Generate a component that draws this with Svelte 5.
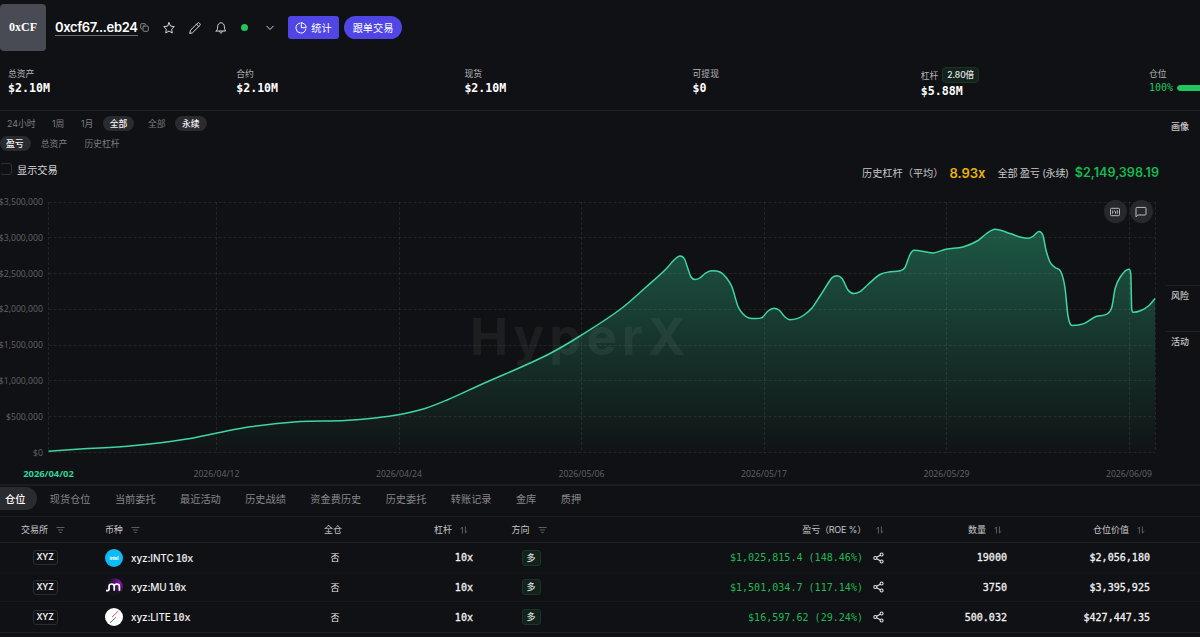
<script>
	const stats = [
		{ label: '总资产', value: '$2.10M' },
		{ label: '合约', value: '$2.10M' },
		{ label: '现货', value: '$2.10M' },
		{ label: '可提现', value: '$0' },
		{ label: '杠杆', value: '$5.88M', badge: '2.80倍' },
		{ label: '仓位', percent: 100 }
	];

	const ranges = ['24小时', '1周', '1月', '全部'];
	const markets = ['全部', '永续'];
	const metrics = ['盈亏', '总资产', '历史杠杆'];
	const tabs = ['仓位', '现货仓位', '当前委托', '最近活动', '历史战绩', '资金费历史', '历史委托', '转账记录', '金库', '质押'];

	let range = '全部';
	let market = '永续';
	let metric = '盈亏';
	let tab = '仓位';

	const positions = [
		{ coin: 'INTC', pnl: '$1,025,815.4 (148.46%)', size: '19000', value: '$2,056,180' },
		{ coin: 'MU', pnl: '$1,501,034.7 (117.14%)', size: '3750', value: '$3,395,925' },
		{ coin: 'LITE', pnl: '$16,597.62 (29.24%)', size: '500.032', value: '$427,447.35' }
	];

	// Chart geometry
	const left = 48.5;
	const right = 1155;
	const top = 12;
	const bottom = 262.5;

	const yTicks = [3500000, 3000000, 2500000, 2000000, 1500000, 1000000, 500000, 0];
	const xTicks = [
		{ x: 48.5, label: '2026/04/02' },
		{ x: 216.5, label: '2026/04/12' },
		{ x: 399, label: '2026/04/24' },
		{ x: 581.5, label: '2026/05/06' },
		{ x: 764, label: '2026/05/17' },
		{ x: 946.5, label: '2026/05/29' },
		{ x: 1129, label: '2026/06/09' }
	];

	const yPos = (v) => bottom - (v / 3500000) * (bottom - top);

	const points = [
		[48.5, 261.3], [80, 259], [130, 256], [185, 249.3], [217, 243], [250, 236.8], [300, 231.5], [345, 230.5],
		[375, 228], [400, 224.5], [425, 218.5], [447, 210], [480, 195], [550, 163.5], [580, 146], [622, 118],
		[645, 98], [667, 78], [674, 70], [680, 66], [684.5, 69], [688, 79], [691, 87], [695, 89.5], [700, 87.8],
		[706, 82.8], [712, 80.8], [720, 82], [726, 87.3], [732, 97], [738, 116.5], [743, 124], [749, 128],
		[756, 128.6], [762, 127.6], [768, 121], [774, 118.2], [779, 120], [785, 127], [790, 129.7], [797, 128.6],
		[804, 125], [812, 118], [820, 106], [827, 95], [832, 87.8], [837, 85.8], [842, 88.5], [848, 100],
		[854, 103.6], [860, 101.7], [868, 94.5], [880, 84.5], [890, 81.8], [900, 80.8], [905, 77.5], [910, 64.5],
		[914, 60.3], [933, 62.9], [946, 59.2], [963, 57], [978, 50.5], [986, 44], [995, 39.3], [1010, 43.5],
		[1020, 47], [1028, 48.3], [1033, 46.3], [1039, 41.4], [1043, 45.5], [1046, 60], [1050, 72], [1055, 77.5],
		[1061, 82], [1065, 98], [1068, 126], [1072, 135.4], [1084, 133.6], [1096, 126.5], [1107, 124],
		[1112, 116.5], [1115, 99], [1121, 86], [1129, 79.3], [1130.8, 84], [1131.7, 119], [1133, 122.3],
		[1141, 120.5], [1149, 115.5], [1155, 108.5]
	];

	// Monotone cubic interpolation so the curve never overshoots a point
	function smooth(pts) {
		const n = pts.length;
		const slopes = [];
		for (let i = 0; i < n - 1; i++) {
			slopes.push((pts[i + 1][1] - pts[i][1]) / (pts[i + 1][0] - pts[i][0]));
		}
		const m = pts.map((p, i) => {
			if (i === 0) return slopes[0];
			if (i === n - 1) return slopes[n - 2];
			const a = slopes[i - 1];
			const b = slopes[i];
			if (a * b <= 0) return 0;
			const limit = 3 * Math.min(Math.abs(a), Math.abs(b));
			return Math.sign(a) * Math.min(Math.abs(a + b) / 2, limit);
		});
		let d = `M${pts[0][0]},${pts[0][1]}`;
		for (let i = 0; i < n - 1; i++) {
			const [x0, y0] = pts[i];
			const [x1, y1] = pts[i + 1];
			const h = (x1 - x0) / 3;
			d += `C${x0 + h},${y0 + m[i] * h} ${x1 - h},${y1 - m[i + 1] * h} ${x1},${y1}`;
		}
		return d;
	}

	const line = smooth(points);
	const area = `${line}L${right},${bottom}L${left},${bottom}Z`;
</script>

{#snippet filterIcon()}
	<svg class="th-icon" width="9" height="8" viewBox="0 0 9 8"><path d="M.5 1.5h8M2 4h5M3.3 6.5h2.4" /></svg>
{/snippet}

{#snippet sortIcon()}
	<svg class="th-icon" width="8" height="8" viewBox="0 0 8 8"><path d="M2.4 7.5V1L.6 2.8M5.4.5V7l1.9-1.8" /></svg>
{/snippet}

<div class="page">
	<header>
		<div class="avatar">0xCF</div>
		<span class="address">0xcf67...eb24</span>
		<svg class="copy" width="9" height="9" viewBox="0 0 9 9"><rect x="3" y="3" width="5.3" height="5.3" rx="1" /><path d="M1.8 5.8H1.5a.8.8 0 0 1-.8-.8V1.500a.8.8 0 0 1 .8-.8H5a.8.8 0 0 1 .8.8" /></svg>
		<svg class="star" width="12" height="12" viewBox="0 0 12 12"><path d="M6 .7l1.600 3.400 3.700.5-2.700 2.600.7 3.700L6 9.100l-3.300 1.800.7-3.700L.7 4.600l3.700-.5z" /></svg>
		<svg class="pencil" width="12" height="12" viewBox="0 0 12 12"><path d="M.8 11.200l.7-3L8.500 1.200a1.300 1.300 0 0 1 1.900 0l.4.4a1.300 1.300 0 0 1 0 1.900L3.800 10.500zM7.500 2.200l2.300 2.300" /></svg>
		<svg class="bell" width="12" height="12" viewBox="0 0 12 12"><path d="M1.200 9h9.600c-.9-.9-1.400-1.700-1.400-4.100C9.400 2.500 8 .8 6 .8S2.600 2.500 2.600 4.900C2.600 7.300 2.100 8.100 1.200 9zM4.600 9.300c.1 1.100.6 1.700 1.400 1.700s1.300-.6 1.400-1.700" /></svg>
		<i class="online"></i>
		<svg class="chevron" width="8" height="6" viewBox="0 0 8 6"><path d="M.8 1.200L4 4.500l3.200-3.300" /></svg>
		<button class="btn stat-btn">
			<svg width="12" height="12" viewBox="0 0 12 12"><path d="M4.700 1.200a5 5 0 1 0 6.100 6.100M6.300.8v4.900h4.900A4.900 4.900 0 0 0 6.300.8z" /></svg>
			统计
		</button>
		<button class="btn copy-btn">跟单交易</button>
	</header>

	<section class="stats">
		{#each stats as s}
			<div class="stat">
				<div class="stat-label">
					{s.label}
					{#if s.badge}<span class="lev-badge">{s.badge}</span>{/if}
				</div>
				{#if s.percent}
					<div class="usage">{s.percent}%<span class="bar"><i style="width: {s.percent}%"></i></span></div>
				{:else}
					<div class="stat-value">{s.value}</div>
				{/if}
			</div>
		{/each}
	</section>

	<main>
		<section class="panel">
			<div class="filters">
				{#each ranges as r}
					<button class:active={range === r} on:click={() => (range = r)}>{r}</button>
				{/each}
				<span class="sep"></span>
				{#each markets as m}
					<button class:active={market === m} on:click={() => (market = m)}>{m}</button>
				{/each}
			</div>
			<div class="filters metrics">
				{#each metrics as m}
					<button class:active={metric === m} on:click={() => (metric = m)}>{m}</button>
				{/each}
			</div>
			<div class="summary">
				<div class="toggle"><i></i>显示交易</div>
				<div class="totals">
					<span class="avg-label">历史杠杆（平均）</span>
					<b class="avg">8.93x</b>
					<span class="pnl-label">全部 盈亏 (永续)</span>
					<b class="total">$2,149,398.19</b>
				</div>
			</div>

			<div class="chart">
				<svg width="1165" height="294" viewBox="0 0 1165 294">
					<defs>
						<linearGradient id="fill" gradientUnits="userSpaceOnUse" x1="0" y1="39" x2="0" y2={bottom}>
							<stop offset="0" stop-color="#34d399" stop-opacity="0.36" />
							<stop offset="1" stop-color="#34d399" stop-opacity="0.01" />
						</linearGradient>
					</defs>
					<path d={area} fill="url(#fill)" />
					<g class="grid">
						{#each yTicks as t}
							<line x1={left} x2={right} y1={Math.floor(yPos(t)) + 0.5} y2={Math.floor(yPos(t)) + 0.5} />
						{/each}
						{#each xTicks as t}
							<line x1={Math.floor(t.x) + 0.5} x2={Math.floor(t.x) + 0.5} y1={top} y2={bottom} />
						{/each}
						<line x1="1155.5" x2="1155.5" y1={top} y2={bottom} />
					</g>
					<text class="watermark" x="470" y="165">HyperX</text>
					<path class="line" d={line} />
					{#each yTicks as t}
						<text class="tick" x="43" y={yPos(t) + 3} text-anchor="end">${t.toLocaleString('en-US')}</text>
					{/each}
					{#each xTicks as t, i}
						<text class="tick" class:first={i === 0} x={t.x} y="287" text-anchor="middle">{t.label}</text>
					{/each}
				</svg>
				<div class="tools">
					<button aria-label="kline"><svg width="12" height="12" viewBox="0 0 12 12"><rect x="1.500" y="2.300" width="9" height="7.400" rx="1" /><path d="M3.700 4.500v3.200M5.500 4.500l1 1.500v1.700M8.300 4.300v3.400" /></svg></button>
					<button aria-label="comment"><svg width="12" height="12" viewBox="0 0 12 12"><path d="M1 10.800V2.200a.8.8 0 0 1 .8-.8h8.400a.8.8 0 0 1 .8.8v6a.8.8 0 0 1-.8.8H2.900z" /></svg></button>
				</div>
			</div>
		</section>

		<aside>
			<div class="portrait">画像</div>
			<div class="risk">风险</div>
			<div class="activity">活动</div>
		</aside>
	</main>

	<nav>
		{#each tabs as t}
			<button class:active={tab === t} on:click={() => (tab = t)}>{t}</button>
		{/each}
	</nav>

	<section class="table">
		<div class="row head">
			<div class="c ex">交易所 {@render filterIcon()}</div>
			<div class="coin">币种 {@render filterIcon()}</div>
			<div class="c cross">全仓</div>
			<div class="r lev">杠杆 {@render sortIcon()}</div>
			<div class="c dir">方向 {@render filterIcon()}</div>
			<div class="r pnl-head"><span>盈亏（ROE %）</span> {@render sortIcon()}</div>
			<div class="r qty">数量 {@render sortIcon()}</div>
			<div class="r val">仓位价值 {@render sortIcon()}</div>
		</div>
		{#each positions as p}
			<div class="row">
				<div class="c"><span class="venue">XYZ</span></div>
				<div class="coin">
					<svg class="logo" width="18" height="18" viewBox="0 0 18 18">
						{#if p.coin === 'INTC'}
							<circle cx="9" cy="9" r="9" fill="#0dbcf6" />
							<text x="9" y="11" text-anchor="middle" class="intel">intel</text>
						{:else if p.coin === 'MU'}
							<defs>
								<radialGradient id="mu" cx=".85" cy=".25" r=".6">
									<stop offset="0" stop-color="#8d12b5" />
									<stop offset="1" stop-color="#17131c" />
								</radialGradient>
							</defs>
							<circle cx="9" cy="9" r="9" fill="url(#mu)" />
							<path d="M1 12.600h1.600c1.400 0 1.500-.8 1.500-2V8.300c0-1.500.9-2.300 2.500-2.300s2.600.9 2.600 2.400v4.400V8.400C9.200 6.900 10.200 6 11.800 6s2.600.9 2.600 2.400v4.400" fill="none" stroke="#fff" stroke-width="1.700" />
						{:else}
							<circle cx="9" cy="9" r="9" fill="#fff" />
							<path d="M7 9.200l6.200-6" stroke="#d9474e" stroke-width="1" />
							<path d="M5 14.800l6-5.600" stroke="#3a8b6c" stroke-width="1" />
						{/if}
					</svg>
					<span>xyz:{p.coin} <em>10x</em></span>
				</div>
				<div class="c">否</div>
				<div class="r num">10x</div>
				<div class="c"><span class="long">多</span></div>
				<div class="r pnl">
					{p.pnl}
					<svg width="11" height="12" viewBox="0 0 11 12"><circle cx="8.600" cy="2.500" r="1.500" /><circle cx="2.300" cy="6" r="1.500" /><circle cx="8.600" cy="9.500" r="1.500" /><path d="M3.700 5.200l3.500-2M3.700 6.800l3.500 2" /></svg>
				</div>
				<div class="r num">{p.size}</div>
				<div class="r num">{p.value}</div>
			</div>
		{/each}
	</section>
</div>

<style>
	:global(body) {
		background: #101114;
		overflow: hidden;
	}
	.page {
		width: 1200px;
		height: 637px;
		overflow: hidden;
		background: #101114;
		color: #e8e9eb;
		font-family: Inter, 'Noto Sans CJK SC', sans-serif;
		font-size: 9px;
	}
	button {
		border: 0;
		padding: 0;
		margin: 0;
		background: none;
		color: inherit;
		font: inherit;
		white-space: nowrap;
	}
	svg {
		flex: none;
		display: block;
	}
	header {
		display: flex;
		align-items: center;
		height: 55px;
	}
	header svg {
		fill: none;
		stroke: #d4d5d8;
		stroke-width: 1;
		stroke-linejoin: round;
		stroke-linecap: round;
	}
	.avatar {
		width: 46px;
		height: 47px;
		border-radius: 4px;
		background: #494b54;
		color: #fff;
		font: bold 12px/47px 'Liberation Serif', serif;
		text-align: center;
	}
	.address {
		margin-left: 9px;
		width: 83px;
		font-size: 13px;
		font-weight: 600;
		line-height: 15px;
		letter-spacing: -0.37px;
		border-bottom: 1px solid #6b6c70;
		color: #fff;
		white-space: nowrap;
	}
	header .copy {
		margin-left: 2px;
		margin-right: 1px;
		stroke: #a4a5a9;
		stroke-width: 0.8;
	}
	.star {
		margin-left: 13px;
	}
	.pencil,
	.bell {
		margin-left: 14px;
	}
	.online {
		width: 7px;
		height: 7px;
		margin-left: 14px;
		border-radius: 50%;
		background: #22c55e;
	}
	.chevron {
		margin: 0 14px 0 18px;
	}
	.btn {
		display: flex;
		align-items: center;
		justify-content: center;
		height: 23px;
		background: #4f46e5;
		color: #fff;
		font-size: 10.2px;
	}
	.btn svg {
		stroke: #fff;
	}
	.stat-btn {
		width: 51px;
		gap: 4px;
		border-radius: 3px;
	}
	.copy-btn {
		width: 58px;
		margin-left: 5px;
		border-radius: 12px;
	}
	.stats {
		display: grid;
		grid-template-columns: repeat(6, 228.2px);
		box-sizing: border-box;
		height: 56px;
		padding: 12px 0 0 8px;
		border-bottom: 1px solid #202226;
	}
	.stat-label {
		display: flex;
		align-items: center;
		gap: 4px;
		min-height: 13px;
		color: #b3b4b8;
		font-size: 8.8px;
		line-height: 13px;
	}
	.lev-badge {
		padding: 0 4px;
		border: 1px solid #1a3527;
		border-radius: 4px;
		background: #12231b;
		color: #e8e9eb;
		font-size: 8.600px;
		font-weight: 500;
		line-height: 14px;
		letter-spacing: -0.1px;
	}
	.stat-value {
		margin-top: 1px;
		color: #fff;
		font: bold 11.600px/14px 'DejaVu Sans Mono', monospace;
	}
	.usage {
		display: flex;
		align-items: center;
		gap: 4px;
		margin-top: 1px;
		color: #22c55e;
		font: 10px/14px 'DejaVu Sans Mono', monospace;
	}
	.bar {
		width: 60px;
		height: 6px;
		border-radius: 3px;
		overflow: hidden;
	}
	.bar i {
		display: block;
		height: 100%;
		border-radius: 3px;
		background: #22c55e;
	}
	main {
		display: flex;
		height: 373px;
	}
	.panel {
		width: 1165px;
		padding-top: 5px;
	}
	.filters {
		display: flex;
		align-items: center;
		gap: 2.5px;
		height: 15px;
		color: #7c7d82;
		font-size: 8.8px;
	}
	.filters button {
		height: 15px;
		padding: 0 7px;
		border-radius: 8px;
		line-height: 15px;
	}
	.filters .sep {
		width: 1.5px;
	}
	.filters .active {
		background: #2a2b2f;
		color: #f2f2f3;
		font-weight: 500;
	}
	.metrics {
		gap: 3.2px;
		margin-top: 5px;
	}
	.metrics button:first-child {
		padding-left: 6px;
	}
	.summary {
		display: flex;
		justify-content: space-between;
		height: 34px;
		margin-top: 5px;
	}
	.toggle {
		display: flex;
		align-items: center;
		gap: 5px;
		height: 26px;
		color: #d8d9db;
		font-size: 10.2px;
	}
	.toggle i {
		box-sizing: border-box;
		width: 12px;
		height: 12px;
		border: 1px solid #303136;
		border-left-color: transparent;
		border-radius: 3px;
	}
	.totals {
		display: flex;
		align-items: center;
		height: 33px;
		padding-right: 6px;
		color: #c5c6c9;
		font-size: 10.2px;
	}
	.avg {
		margin: 0 12px 0 6px;
		color: #eab308;
		font-size: 13px;
		font-weight: 600;
	}
	.pnl-label {
		letter-spacing: -0.3px;
	}
	.total {
		margin-left: 6px;
		color: #16b950;
		font-size: 12.600px;
		font-weight: 600;
	}
	.chart {
		position: relative;
	}
	.grid line {
		stroke: #fff;
		stroke-opacity: 0.08;
		stroke-dasharray: 3 2;
	}
	.line {
		fill: none;
		stroke: #3fd6a2;
		stroke-width: 1.5;
	}
	.watermark {
		fill: #fff;
		fill-opacity: 0.055;
		font: bold 51px Inter, sans-serif;
		letter-spacing: 5px;
	}
	.tick {
		fill: #626368;
		font: 8.700px 'Open Sans', sans-serif;
	}
	.first {
		fill: #34d399;
		font-size: 9.400px;
		font-weight: bold;
	}
	.tools {
		position: absolute;
		top: 10px;
		right: 12.5px;
		display: flex;
		gap: 3px;
	}
	.tools button {
		display: flex;
		align-items: center;
		justify-content: center;
		width: 23px;
		height: 23px;
		border-radius: 50%;
		background: #27282c;
	}
	.tools svg {
		fill: none;
		stroke: #b9babd;
	}
	aside {
		width: 34px;
		margin-left: 1px;
		color: #c8c9cc;
		font-size: 9px;
		font-weight: 500;
		line-height: 14px;
	}
	aside div {
		box-sizing: border-box;
		padding-left: 5px;
	}
	.portrait {
		height: 174px;
		padding-top: 9px;
	}
	.risk {
		height: 46px;
		padding-top: 3px;
		border-top: 1px solid #202226;
	}
	.activity {
		padding-top: 3px;
		border-top: 1px solid #202226;
	}
	nav {
		display: flex;
		align-items: flex-start;
		gap: 0.4px;
		box-sizing: border-box;
		height: 33px;
		padding-top: 1px;
		border-top: 2px solid #1b1c20;
		border-bottom: 1px solid #1d1e22;
		color: #85868b;
		font-size: 10.2px;
	}
	nav button {
		height: 23px;
		padding: 0 12px;
		line-height: 24px;
		border-radius: 12px;
	}
	nav .active {
		padding-left: 5px;
		border-radius: 0 12px 12px 0;
		background: #2a2b2f;
		color: #fff;
		font-weight: 500;
	}
	.table {
		border-bottom: 1px solid #1d1e22;
	}
	.row {
		display: grid;
		grid-template-columns: 90px 210px 70px 103px 116px 298px 120px 143px;
		align-items: center;
		box-sizing: border-box;
		height: 29.5px;
		padding-top: 1px;
		border-bottom: 1px solid #17181b;
		color: #f0f0f2;
	}
	.row:last-child {
		border-bottom: 0;
	}
	.row > div {
		display: flex;
		align-items: center;
		white-space: nowrap;
	}
	.row > .c {
		justify-content: center;
	}
	.row > .r {
		justify-content: flex-end;
	}
	.row .coin {
		padding-left: 15px;
		gap: 8px;
		font-size: 10px;
		font-weight: 500;
		letter-spacing: -0.15px;
	}
	.coin em {
		margin-left: -0.5px;
		font: 10px 'DejaVu Sans Mono', monospace;
		-webkit-text-stroke: 0.2px;
	}
	.row.head {
		height: 26px;
		padding-top: 0;
		border-bottom: 1px solid #222327;
		color: #c6c7ca;
	}
	.head > div {
		gap: 8px;
	}
	.head .coin {
		font-size: 9px;
		font-weight: 400;
	}
	.head .ex {
		padding-right: 4px;
	}
	.head .cross {
		padding-right: 4px;
	}
	.head .lev,
	.head .qty,
	.head .val {
		padding-right: 5px;
	}
	.head .dir {
		padding-right: 4px;
	}
	.head .pnl-head {
		padding-right: 3px;
		gap: 10px;
	}
	.pnl-head span {
		letter-spacing: -0.2px;
	}
	.th-icon {
		fill: none;
		stroke: #65666b;
		stroke-width: 0.9;
	}
	.venue {
		box-sizing: border-box;
		width: 25px;
		height: 15px;
		border: 1px solid #2b2c31;
		border-radius: 3px;
		font-size: 8.500px;
		font-weight: 600;
		line-height: 13px;
		letter-spacing: -0.2px;
		text-align: center;
	}
	.intel {
		fill: #fff;
		font: bold 4.500px Inter, sans-serif;
	}
	.num {
		font: 10.050px 'DejaVu Sans Mono', monospace;
		-webkit-text-stroke: 0.3px;
	}
	.long {
		box-sizing: border-box;
		width: 19px;
		height: 16px;
		border: 1px solid #1a3527;
		border-radius: 3px;
		background: #12231b;
		line-height: 14px;
		text-align: center;
	}
	.pnl {
		gap: 9.5px;
		padding-right: 3.5px;
		color: #22b857;
		font: 10.050px 'DejaVu Sans Mono', monospace;
	}
	.pnl svg {
		fill: none;
		stroke: #e0e1e3;
		stroke-width: 1.1;
	}
</style>
